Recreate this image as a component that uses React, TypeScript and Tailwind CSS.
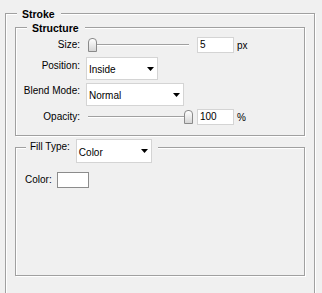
import React from "react";

const Arrow = () => (
  <svg width="7" height="4" viewBox="0 0 7 4" className="shrink-0">
    <path d="M0 0h7L3.5 4z" fill="#000" />
  </svg>
);

const Select = ({ value, size }: { value: string; size: string }) => (
  <div
    className={`${size} flex items-center justify-between border border-[#d4d4d4] bg-white pl-[2px] pr-[3px]`}
  >
    <span className="pt-[3px] leading-[14px]">{value}</span>
    <Arrow />
  </div>
);

const Slider = ({ thumb }: { thumb: string }) => (
  <div className="relative h-[16px] w-[101px]">
    <div className="absolute left-0 right-0 top-[7px] h-px bg-[#a0a0a0] shadow-[0_1px_0_#fff]" />
    <div
      className={`absolute top-[1px] ${thumb} h-[14px] w-[9px] rounded-t-[4px] border border-[#8a8a8a] bg-linear-to-b from-white to-[#d6d6d6]`}
    />
  </div>
);

const Field = ({ value }: { value: string }) => (
  <div className="h-[16px] w-[37px] border border-[#d4d4d4] bg-white pl-[2px] leading-[14px]">
    {value}
  </div>
);

const Label = ({ children, pad = "" }: { children: React.ReactNode; pad?: string }) => (
  <div className={`w-[64px] shrink-0 text-right leading-[14px] ${pad}`}>{children}</div>
);

const box =
  "border border-[#a0a0a0] shadow-[1px_1px_0_#fff,inset_1px_1px_0_#fff]";

export default function App() {
  return (
    <div className="h-[293px] w-[322px] overflow-hidden bg-[#f0f0f0] pl-[5px] pt-[13px] font-['Liberation_Sans',Arial,sans-serif] text-[10px] text-black">
      <div className={`${box} h-[300px] w-[310px] px-[9px]`}>
        {/* Stroke */}
        <div className="-mx-[9px] -mt-[7px] flex h-[14px]">
          <span className="ml-[11px] bg-[#f0f0f0] pl-[5px] pr-[6px] text-[10.5px] font-bold leading-[14px]">
            Stroke
          </span>
        </div>

        {/* Structure */}
        <div className={`${box} mt-[6px] w-[290px] pb-[10px]`}>
          <div className="-mt-[7px] flex h-[14px]">
            <span className="ml-[11px] bg-[#f0f0f0] pl-[5px] pr-[6px] text-[10.5px] font-bold leading-[14px]">
              Structure
            </span>
          </div>

          <div className="mt-[2px] flex h-[16px] items-center">
            <Label>Size:</Label>
            <div className="ml-[8px]">
              <Slider thumb="left-0" />
            </div>
            <div className="ml-[8px]">
              <Field value="5" />
            </div>
            <span className="ml-[3px]">px</span>
          </div>

          <div className="mt-[4px] flex items-start">
            <Label pad="pt-[2px]">Position:</Label>
            <div className="ml-[6px]">
              <Select value="Inside" size="w-[72px] h-[23px]" />
            </div>
          </div>

          <div className="mt-[3px] flex items-start">
            <Label pad="pt-[1px]">Blend Mode:</Label>
            <div className="ml-[6px]">
              <Select value="Normal" size="w-[98px] h-[23px]" />
            </div>
          </div>

          <div className="mt-[3px] flex h-[16px] items-center">
            <Label>Opacity:</Label>
            <div className="ml-[8px]">
              <Slider thumb="left-[96px]" />
            </div>
            <div className="ml-[8px]">
              <Field value="100" />
            </div>
            <span className="ml-[3px]">%</span>
          </div>
        </div>

        {/* Fill Type */}
        <div className={`${box} mt-[11px] h-[129px] w-[290px]`}>
          <div className="-mt-[9px] flex">
            <div className="ml-[10px] flex items-start bg-[#f0f0f0] pl-[4px] pr-[6px]">
              <span className="pt-[1px] leading-[14px]">Fill Type:</span>
              <div className="ml-[6px]">
                <Select value="Color" size="w-[76px] h-[24px]" />
              </div>
            </div>
          </div>

          <div className="mt-[9px] flex items-center pl-[9px]">
            <span className="leading-[14px]">Color:</span>
            <div className="ml-[5px] h-[16px] w-[32px] border border-[#8c8c8c] bg-white" />
          </div>
        </div>
      </div>
    </div>
  );
}
